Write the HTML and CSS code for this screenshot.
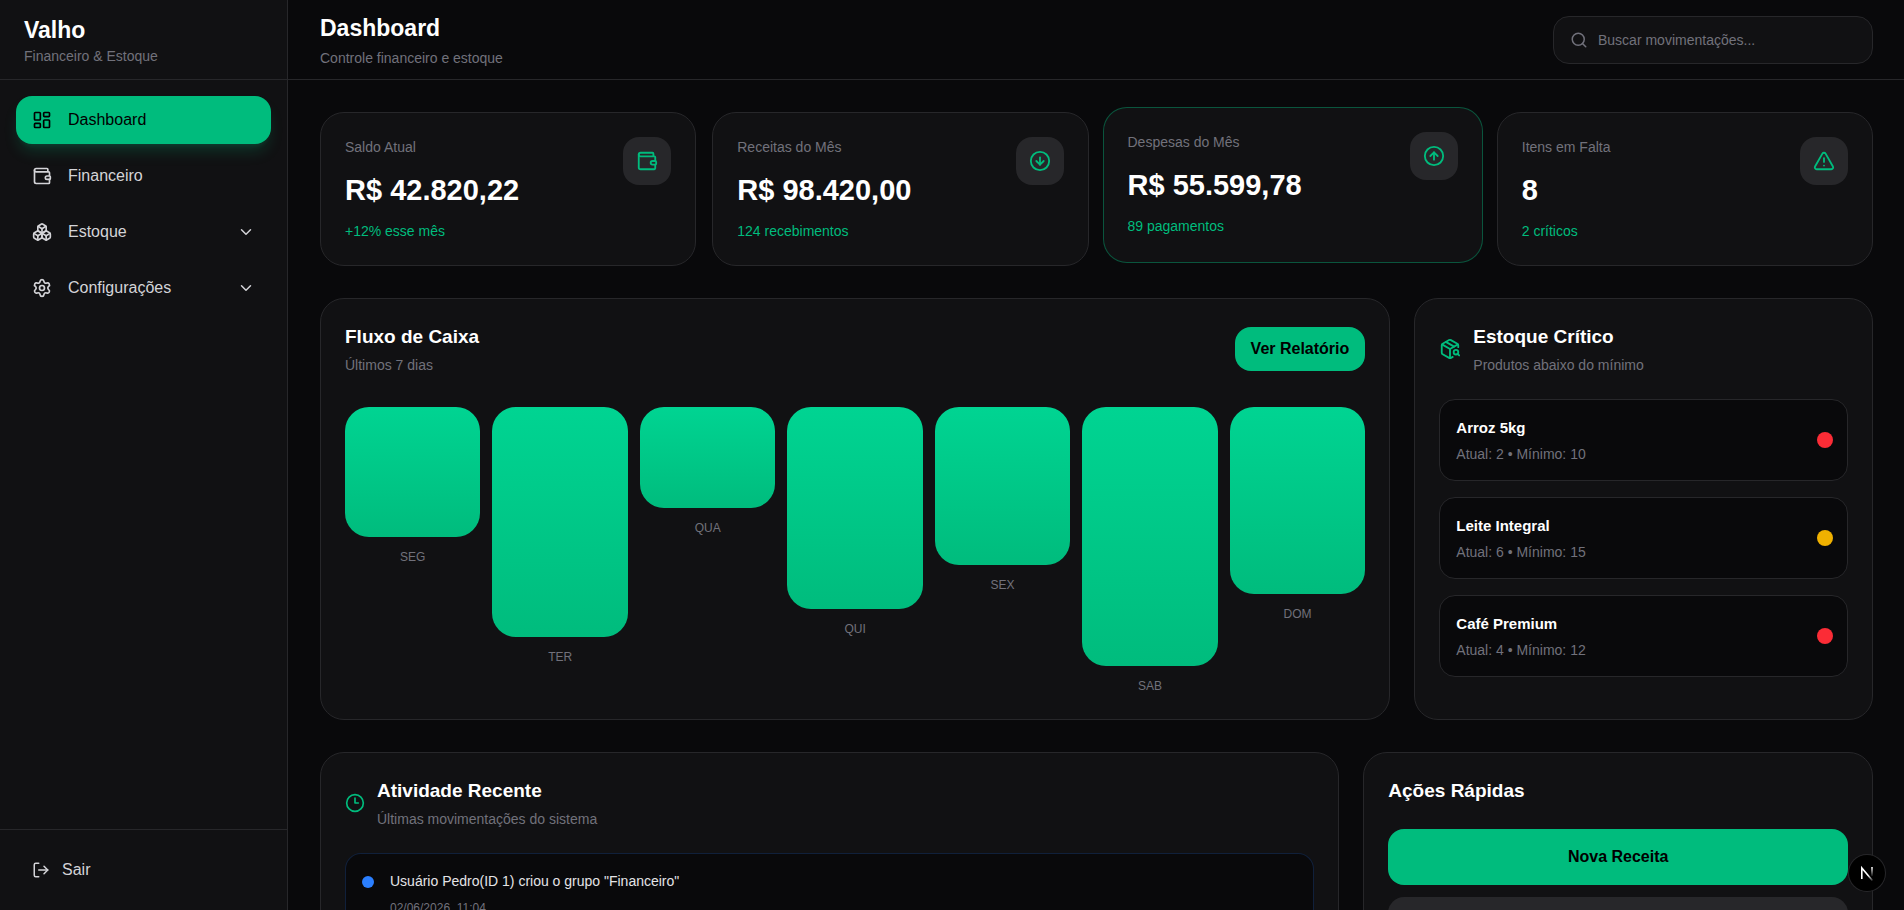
FILE: index.html
```html
<!DOCTYPE html>
<html lang="pt-BR">
  <head>
    <meta charset="UTF-8" />
    <meta name="viewport" content="width=device-width, initial-scale=1.0" />
    <title>Valho - Dashboard</title>

    <link rel="stylesheet" href="styles.css">
  </head>
  <body>
    <div class="app">
      <!-- =========== sidebar ========= -->
      <aside class="sidebar">
        <div class="brand">
          <h1>Valho</h1>
          <p>Financeiro &amp; Estoque</p>
        </div>

        <nav class="nav">
          <a href="#" class="nav-item active">
            <svg class="icon icon-md" viewBox="0 0 24 24">
              <rect width="7" height="9" x="3" y="3" rx="1" />
              <rect width="7" height="5" x="14" y="3" rx="1" />
              <rect width="7" height="9" x="14" y="12" rx="1" />
              <rect width="7" height="5" x="3" y="16" rx="1" />
            </svg>
            <span>Dashboard</span>
          </a>
          <a href="#" class="nav-item">
            <svg class="icon icon-md" viewBox="0 0 24 24">
              <path d="M19 7V4a1 1 0 0 0-1-1H5a2 2 0 0 0 0 4h15a1 1 0 0 1 1 1v4h-3a2 2 0 0 0 0 4h3a1 1 0 0 0 1-1v-2a1 1 0 0 0-1-1" />
              <path d="M3 5v14a2 2 0 0 0 2 2h15a1 1 0 0 0 1-1v-4" />
            </svg>
            <span>Financeiro</span>
          </a>
          <button type="button" class="nav-item">
            <svg class="icon icon-md" viewBox="0 0 24 24">
              <path d="M2.97 12.92A2 2 0 0 0 2 14.63v3.24a2 2 0 0 0 .97 1.71l3 1.8a2 2 0 0 0 2.06 0L12 19v-5.5l-5-3-4.03 2.42Z" />
              <path d="m7 16.5-4.74-2.85" />
              <path d="m7 16.5 5-3" />
              <path d="M7 16.5v5.17" />
              <path d="M12 13.5V19l3.97 2.38a2 2 0 0 0 2.06 0l3-1.8a2 2 0 0 0 .97-1.71v-3.24a2 2 0 0 0-.97-1.71L17 10.5l-5 3Z" />
              <path d="m17 16.5-5-3" />
              <path d="m17 16.5 4.74-2.85" />
              <path d="M17 16.5v5.17" />
              <path d="M7.97 4.42A2 2 0 0 0 7 6.13v4.37l5 3 5-3V6.13a2 2 0 0 0-.97-1.71l-3-1.8a2 2 0 0 0-2.06 0l-3 1.8Z" />
              <path d="M12 8 7.26 5.15" />
              <path d="m12 8 4.74-2.85" />
              <path d="M12 13.5V8" />
            </svg>
            <span>Estoque</span>
            <svg class="icon icon-sm chevron" viewBox="0 0 24 24">
              <path d="m6 9 6 6 6-6" />
            </svg>
          </button>
          <button type="button" class="nav-item">
            <svg class="icon icon-md" viewBox="0 0 24 24">
              <path d="M9.671 4.136a2.34 2.34 0 0 1 4.659 0 2.34 2.34 0 0 0 3.319 1.915 2.34 2.34 0 0 1 2.33 4.033 2.34 2.34 0 0 0 0 3.831 2.34 2.34 0 0 1-2.33 4.033 2.34 2.34 0 0 0-3.319 1.915 2.34 2.34 0 0 1-4.659 0 2.34 2.34 0 0 0-3.32-1.915 2.34 2.34 0 0 1-2.33-4.033 2.34 2.34 0 0 0 0-3.831A2.34 2.34 0 0 1 6.35 6.051a2.34 2.34 0 0 0 3.319-1.915" />
              <circle cx="12" cy="12" r="3" />
            </svg>
            <span>Configurações</span>
            <svg class="icon icon-sm chevron" viewBox="0 0 24 24">
              <path d="m6 9 6 6 6-6" />
            </svg>
          </button>
        </nav>

        <div class="sidebar-footer">
          <button type="button" class="nav-item logout">
            <svg class="icon icon-sm" viewBox="0 0 24 24">
              <path d="m16 17 5-5-5-5" />
              <path d="M21 12H9" />
              <path d="M9 21H5a2 2 0 0 1-2-2V5a2 2 0 0 1 2-2h4" />
            </svg>
            <span>Sair</span>
          </button>
        </div>
      </aside>

      <div class="main">
        <!-- =========== header ========= -->
        <header class="topbar">
          <div>
            <h2>Dashboard</h2>
            <p>Controle financeiro e estoque</p>
          </div>
          <label class="search">
            <svg class="icon icon-sm" viewBox="0 0 24 24">
              <circle cx="11" cy="11" r="8" />
              <path d="m21 21-4.34-4.34" />
            </svg>
            <input type="text" placeholder="Buscar movimentações..." aria-label="Buscar movimentações" />
          </label>
        </header>

        <main class="content">
          <!-- =========== stats ========= -->
          <section class="stats">
            <div class="card stat">
              <div>
                <p class="stat-label">Saldo Atual</p>
                <p class="stat-value">R$ 42.820,22</p>
                <p class="stat-info">+12% esse mês</p>
              </div>
              <div class="stat-icon">
                <svg class="icon icon-lg" viewBox="0 0 24 24">
                  <path d="M19 7V4a1 1 0 0 0-1-1H5a2 2 0 0 0 0 4h15a1 1 0 0 1 1 1v4h-3a2 2 0 0 0 0 4h3a1 1 0 0 0 1-1v-2a1 1 0 0 0-1-1" />
                  <path d="M3 5v14a2 2 0 0 0 2 2h15a1 1 0 0 0 1-1v-4" />
                </svg>
              </div>
            </div>
            <div class="card stat">
              <div>
                <p class="stat-label">Receitas do Mês</p>
                <p class="stat-value">R$ 98.420,00</p>
                <p class="stat-info">124 recebimentos</p>
              </div>
              <div class="stat-icon">
                <svg class="icon icon-lg" viewBox="0 0 24 24">
                  <circle cx="12" cy="12" r="10" />
                  <path d="M12 8v8" />
                  <path d="m8 12 4 4 4-4" />
                </svg>
              </div>
            </div>
            <div class="card stat raised">
              <div>
                <p class="stat-label">Despesas do Mês</p>
                <p class="stat-value">R$ 55.599,78</p>
                <p class="stat-info">89 pagamentos</p>
              </div>
              <div class="stat-icon">
                <svg class="icon icon-lg" viewBox="0 0 24 24">
                  <circle cx="12" cy="12" r="10" />
                  <path d="m16 12-4-4-4 4" />
                  <path d="M12 16V8" />
                </svg>
              </div>
            </div>
            <div class="card stat">
              <div>
                <p class="stat-label">Itens em Falta</p>
                <p class="stat-value">8</p>
                <p class="stat-info">2 críticos</p>
              </div>
              <div class="stat-icon">
                <svg class="icon icon-lg" viewBox="0 0 24 24">
                  <path d="m21.73 18-8-14a2 2 0 0 0-3.48 0l-8 14A2 2 0 0 0 4 21h16a2 2 0 0 0 1.73-3" />
                  <path d="M12 9v4" />
                  <path d="M12 17h.01" />
                </svg>
              </div>
            </div>
          </section>

          <!-- =========== chart + stock ========= -->
          <section class="overview">
            <div class="card">
              <div class="card-header spread">
                <div>
                  <h3>Fluxo de Caixa</h3>
                  <p>Últimos 7 dias</p>
                </div>
                <button type="button" class="btn btn-report">Ver Relatório</button>
              </div>
              <div class="chart">
                <div class="chart-col">
                  <div class="bar" style="height: 45%"></div>
                  <span>SEG</span>
                </div>
                <div class="chart-col">
                  <div class="bar" style="height: 80%"></div>
                  <span>TER</span>
                </div>
                <div class="chart-col">
                  <div class="bar" style="height: 35%"></div>
                  <span>QUA</span>
                </div>
                <div class="chart-col">
                  <div class="bar" style="height: 70%"></div>
                  <span>QUI</span>
                </div>
                <div class="chart-col">
                  <div class="bar" style="height: 55%"></div>
                  <span>SEX</span>
                </div>
                <div class="chart-col">
                  <div class="bar" style="height: 90%"></div>
                  <span>SAB</span>
                </div>
                <div class="chart-col">
                  <div class="bar" style="height: 65%"></div>
                  <span>DOM</span>
                </div>
              </div>
            </div>

            <div class="card">
              <div class="card-header">
                <svg class="icon icon-lg" viewBox="0 0 24 24">
                  <path d="M21 10V8a2 2 0 0 0-1-1.73l-7-4a2 2 0 0 0-2 0l-7 4A2 2 0 0 0 3 8v8a2 2 0 0 0 1 1.73l7 4a2 2 0 0 0 2 0l2-1.14" />
                  <path d="m7.5 4.27 9 5.15" />
                  <path d="M3.29 7 12 12l8.71-5" />
                  <path d="M12 22V12" />
                  <circle cx="18.5" cy="15.5" r="2.5" />
                  <path d="M20.27 17.27 22 19" />
                </svg>
                <div>
                  <h3>Estoque Crítico</h3>
                  <p>Produtos abaixo do mínimo</p>
                </div>
              </div>
              <ul class="stock-list">
                <li>
                  <div>
                    <h4>Arroz 5kg</h4>
                    <p>Atual: 2 • Mínimo: 10</p>
                  </div>
                  <span class="dot red"></span>
                </li>
                <li>
                  <div>
                    <h4>Leite Integral</h4>
                    <p>Atual: 6 • Mínimo: 15</p>
                  </div>
                  <span class="dot yellow"></span>
                </li>
                <li>
                  <div>
                    <h4>Café Premium</h4>
                    <p>Atual: 4 • Mínimo: 12</p>
                  </div>
                  <span class="dot red"></span>
                </li>
              </ul>
            </div>
          </section>

          <!-- =========== activity + actions ========= -->
          <section class="bottom">
            <div class="card">
              <div class="card-header">
                <svg class="icon icon-md" viewBox="0 0 24 24">
                  <circle cx="12" cy="12" r="10" />
                  <path d="M12 6v6h4" />
                </svg>
                <div>
                  <h3>Atividade Recente</h3>
                  <p>Últimas movimentações do sistema</p>
                </div>
              </div>
              <div class="activity">
                <span class="activity-dot"></span>
                <div>
                  <p class="activity-text">Usuário Pedro(ID 1) criou o grupo "Financeiro"</p>
                  <p class="activity-date">02/06/2026, 11:04</p>
                </div>
              </div>
            </div>

            <div class="card">
              <h3>Ações Rápidas</h3>
              <div class="actions">
                <button type="button" class="btn btn-action">Nova Receita</button>
                <button type="button" class="btn btn-action secondary" aria-label="Nova Despesa"></button>
              </div>
            </div>
          </section>
        </main>
      </div>
    </div>

    <!-- dev tools badge -->
    <button type="button" class="dev-badge" aria-label="Dev Tools">
      <svg width="36" height="36" viewBox="0 0 36 36" fill="none">
        <defs>
          <linearGradient id="fadeDiagonal" x1="13" y1="12" x2="24" y2="25" gradientUnits="userSpaceOnUse">
            <stop offset="0.6" stop-color="#fff" />
            <stop offset="1" stop-color="#fff" stop-opacity="0.2" />
          </linearGradient>
          <linearGradient id="fadeStem" x1="0" y1="12" x2="0" y2="22" gradientUnits="userSpaceOnUse">
            <stop stop-color="#fff" />
            <stop offset="1" stop-color="#fff" stop-opacity="0" />
          </linearGradient>
        </defs>
        <path d="M12.8 24V13L23.4 25.6" stroke="url(#fadeDiagonal)" stroke-width="1.6" />
        <path d="M23 12V21" stroke="url(#fadeStem)" stroke-width="1.6" />
      </svg>
    </button>
  </body>
</html>
```
FILE: styles.css
```css
* {
  margin: 0;
  padding: 0;
  box-sizing: border-box;
}

body {
  background: #09090b;
  color: #fff;
  font-family: Arial, "Liberation Sans", Helvetica, sans-serif;
  font-size: 16px;
  line-height: 24px;
}

button,
input {
  font: inherit;
  color: inherit;
  border: none;
  background: none;
}

button {
  cursor: pointer;
}

a {
  color: inherit;
  text-decoration: none;
}

ul {
  list-style: none;
}

.icon {
  flex-shrink: 0;
  fill: none;
  stroke: currentColor;
  stroke-width: 2;
  stroke-linecap: round;
  stroke-linejoin: round;
}

.icon-sm {
  width: 18px;
  height: 18px;
}

.icon-md {
  width: 20px;
  height: 20px;
}

.icon-lg {
  width: 22px;
  height: 22px;
}

.app {
  display: flex;
  height: 100vh;
}

/* ============== sidebar ========================== */
.sidebar {
  width: 288px;
  flex-shrink: 0;
  display: flex;
  flex-direction: column;
  background: #111113;
  border-right: 1px solid #27272a;
}

.brand {
  height: 80px;
  padding: 0 24px;
  display: flex;
  flex-direction: column;
  justify-content: center;
  border-bottom: 1px solid #27272a;
}

.brand h1,
.topbar h2 {
  font-size: 23px;
  line-height: 32px;
}

.brand p,
.topbar p,
.card-header p,
.stock-list p {
  font-size: 14px;
  line-height: 20px;
  color: #71717b;
}

.nav {
  flex: 1;
  display: flex;
  flex-direction: column;
  gap: 8px;
  padding: 16px;
}

.nav-item {
  width: 100%;
  height: 48px;
  display: flex;
  align-items: center;
  gap: 16px;
  padding: 0 16px;
  border-radius: 16px;
  color: #d4d4d8;
}

.nav-item:hover {
  background: #27272a;
}

.nav-item.active {
  background: #00bc7d;
  color: #000;
  box-shadow: 0 10px 15px -3px rgba(0, 188, 125, 0.2),
    0 4px 6px -4px rgba(0, 188, 125, 0.2);
}

.chevron {
  margin-left: auto;
}

.sidebar-footer {
  padding: 16px;
  border-top: 1px solid #27272a;
}

.logout {
  gap: 12px;
}

/* ============== header ========================== */
.main {
  flex: 1;
  min-width: 0;
  display: flex;
  flex-direction: column;
}

.topbar {
  height: 80px;
  flex-shrink: 0;
  display: flex;
  align-items: center;
  justify-content: space-between;
  padding: 0 31px 0 32px;
  border-bottom: 1px solid #27272a;
}

.topbar p {
  margin-top: 4px;
}

.search {
  width: 320px;
  height: 48px;
  display: flex;
  align-items: center;
  gap: 10px;
  padding: 0 16px;
  background: #111113;
  border: 1px solid #27272a;
  border-radius: 16px;
  color: #71717b;
}

.search input {
  flex: 1;
  min-width: 0;
  font-size: 14px;
  outline: none;
}

.search input::placeholder {
  color: #71717b;
}

/* ============== content ========================== */
.content {
  flex: 1;
  display: flex;
  flex-direction: column;
  gap: 32px;
  padding: 32px 31px 32px 32px;
  overflow-y: auto;
  scrollbar-width: none;
}

.card {
  padding: 24px;
  background: #111113;
  border: 1px solid #27272a;
  border-radius: 24px;
}

.card h3 {
  font-size: 19px;
  line-height: 28px;
}

.card-header {
  display: flex;
  align-items: center;
  gap: 12px;
  margin-bottom: 24px;
}

.card-header.spread {
  justify-content: space-between;
  margin-bottom: 32px;
}

.card-header p {
  margin-top: 4px;
}

.card-header .icon {
  color: #00bc7d;
}

.stats {
  display: grid;
  grid-template-columns: repeat(4, 1fr);
  gap: 16px;
}

.stat {
  display: flex;
  align-items: flex-start;
  justify-content: space-between;
}

/* lifted card, grows a little past its cell */
.stat.raised {
  margin: -5px -2px 3px;
  border-color: rgba(0, 188, 125, 0.4);
}

.stat-label {
  font-size: 14px;
  line-height: 20px;
  color: #71717b;
}

.stat-value {
  margin-top: 16px;
  font-size: 29px;
  font-weight: bold;
  line-height: 34px;
}

.stat-info {
  margin-top: 14px;
  font-size: 14px;
  line-height: 20px;
  color: #00bc7d;
}

.stat-icon {
  width: 48px;
  height: 48px;
  display: flex;
  align-items: center;
  justify-content: center;
  background: #27272a;
  border-radius: 16px;
  color: #00bc7d;
}

.overview {
  display: grid;
  grid-template-columns: 7fr 3fr;
  gap: 24px;
}

.btn {
  background: #00bc7d;
  color: #000;
  font-weight: bold;
  border-radius: 16px;
}

.btn-report {
  height: 44px;
  padding: 0 16px;
}

.chart {
  height: 288px;
  display: flex;
  gap: 12px;
}

.chart-col {
  flex: 1;
  display: flex;
  flex-direction: column;
  align-items: center;
  gap: 12px;
}

.chart-col span {
  font-size: 12px;
  line-height: 16px;
  color: #71717b;
}

.bar {
  width: 100%;
  border-radius: 24px;
  background: linear-gradient(to bottom, #00d492, #00bc7d);
}

.stock-list {
  display: flex;
  flex-direction: column;
  gap: 16px;
}

.stock-list li {
  display: flex;
  align-items: center;
  justify-content: space-between;
  padding: 16px 14px 16px 16px;
  background: #09090b;
  border: 1px solid #27272a;
  border-radius: 16px;
}

.stock-list h4 {
  font-size: 15px;
  line-height: 24px;
}

.stock-list p {
  margin-top: 4px;
}

.dot {
  width: 16px;
  height: 16px;
  border-radius: 50%;
}

.dot.red {
  background: #fb2c36;
}

.dot.yellow {
  background: #f0b100;
}

.bottom {
  display: grid;
  grid-template-columns: 2fr 1fr;
  gap: 24px;
}

.activity {
  display: flex;
  gap: 16px;
  padding: 16px;
  background: #09090b;
  border: 1px solid rgba(43, 127, 255, 0.2);
  border-radius: 16px;
}

.activity-dot {
  width: 12px;
  height: 12px;
  margin-top: 6px;
  border-radius: 50%;
  background: #2b7fff;
}

.activity-text {
  font-size: 14px;
  line-height: 22px;
  color: #e4e4e7;
}

.activity-date {
  margin-top: 8px;
  font-size: 12px;
  line-height: 16px;
  color: #71717b;
}

.actions {
  display: flex;
  flex-direction: column;
  gap: 12px;
  margin-top: 24px;
}

.btn-action {
  height: 56px;
}

.btn-action.secondary {
  background: #27272a;
  color: #fff;
}

/* ============== dev badge ========================== */
.dev-badge {
  position: fixed;
  right: 19px;
  bottom: 19px;
  width: 36px;
  height: 36px;
  background: #000;
  border-radius: 50%;
  box-shadow: 0 0 0 1px #27272a;
}
```
